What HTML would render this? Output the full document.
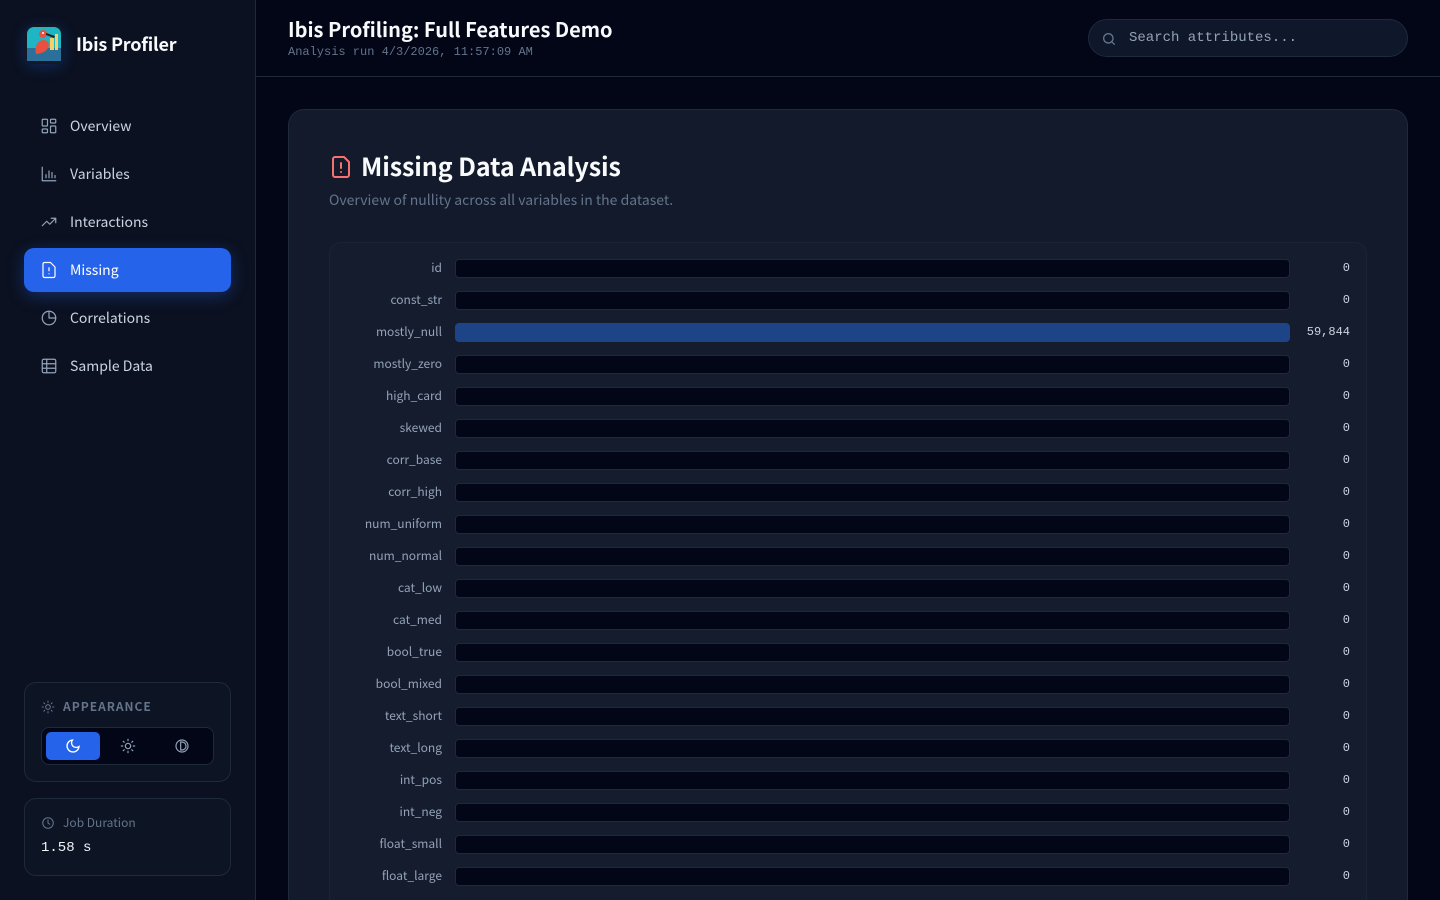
<!DOCTYPE html>
<html><head><meta charset="utf-8"><style>
*{box-sizing:border-box;margin:0;padding:0}
html{width:1440px;height:900px;overflow:hidden;background:#020617}
body{width:1440px;height:900px;overflow:hidden;background:#020617;font-family:"Noto Sans CJK JP","Liberation Sans",sans-serif;color:#e2e8f0;position:relative}
.mono{font-family:"Liberation Mono",monospace}
.side{position:absolute;left:0;top:0;width:256px;height:900px;background:#0b1120;border-right:1px solid #1e293b}
.logo{position:absolute;left:24px;top:24px;width:40px;height:40px;border-radius:10px;background:#111827;box-shadow:0 4px 14px rgba(37,99,235,.25);overflow:hidden}
.brand{position:absolute;left:76px;top:32px;font-size:18px;font-weight:700;color:#f8fafc;line-height:24px;letter-spacing:-.2px}
.nav{position:absolute;left:24px;width:207px;height:44px;display:flex;align-items:center;padding-left:16px;font-size:14px;color:#cbd5e1;border-radius:10px}
.nav svg{width:18px;height:18px;margin-right:12px;fill:none;stroke:#94a3b8;stroke-width:1.6;stroke-linecap:round;stroke-linejoin:round}
.nav.act{background:#2563eb;color:#fff;box-shadow:0 4px 16px rgba(37,99,235,.35)}
.nav.act svg{stroke:#fff}
.box{position:absolute;left:24px;width:207px;border:1px solid #1e293b;border-radius:12px;background:#0d1424}
.hdr{position:absolute;left:256px;top:0;right:0;height:77px;border-bottom:1px solid #1e293b}
.card{position:absolute;left:288px;top:109px;width:1120px;height:791px;border:1px solid #1e293b;border-bottom:none;border-radius:16px 16px 0 0;background:#121a2b;overflow:hidden}
.chart{position:absolute;left:40px;top:132px;width:1038px;height:660px;border:1px solid #1b2436;border-bottom:none;border-radius:12px 12px 0 0;background:#141c2e}
.row{position:absolute;left:0;width:100%;height:20px}
.row .l{position:absolute;right:924px;top:-1px;font-size:12px;color:#94a3b8;line-height:20px;white-space:nowrap}
.row .b{position:absolute;left:125px;width:835px;top:0;height:19px;background:#020617;border:1px solid #1e293b;border-radius:4px}
.row .b.f{background:#1e4488;border-color:#1e4488}
.row .v{position:absolute;right:16px;top:-1px;font-size:12px;color:#cbd5e1;line-height:20px}
</style></head><body>
<div class="side">
 <div class="logo"><svg width="40" height="40" viewBox="0 0 40 40"><rect x="3" y="3" width="34" height="34" rx="7" fill="#1fb5c4"/><rect x="3" y="24" width="34" height="13" fill="#2b6f9b"/><rect x="26" y="14" width="4" height="12" fill="#f2d36b"/><rect x="31" y="10" width="3" height="16" fill="#f2d36b"/><path d="M12 30 C10 22 14 16 20 16 C24 16 26 20 24 24 C22 28 16 30 12 30Z" fill="#e8503f"/><circle cx="19" cy="10" r="4" fill="#e8503f"/><path d="M22 9 L31 12 L30 14 L22 11Z" fill="#222"/><circle cx="19" cy="9" r="1" fill="#fff"/></svg></div>
 <div class="brand">Ibis Profiler</div>
 <div class="nav" style="top:104px"><svg viewBox="0 0 24 24"><rect x="3" y="3" width="7" height="9" rx="1"/><rect x="14" y="3" width="7" height="5" rx="1"/><rect x="14" y="12" width="7" height="9" rx="1"/><rect x="3" y="16" width="7" height="5" rx="1"/></svg>Overview</div>
 <div class="nav" style="top:152px"><svg viewBox="0 0 24 24"><path d="M3 3v18h18M8 17v-4M12 17V8M16 17v-7M20 17v-3"/></svg>Variables</div>
 <div class="nav" style="top:200px"><svg viewBox="0 0 24 24"><path d="M3 17l6-6 4 4 8-8M15 7h6v6"/></svg>Interactions</div>
 <div class="nav act" style="top:248px"><svg viewBox="0 0 24 24"><path d="M14 2H6a2 2 0 0 0-2 2v16a2 2 0 0 0 2 2h12a2 2 0 0 0 2-2V8z"/><path d="M12 9v4M12 17h.01"/></svg>Missing</div>
 <div class="nav" style="top:296px"><svg viewBox="0 0 24 24"><circle cx="12" cy="12" r="9"/><path d="M12 3v9h9"/></svg>Correlations</div>
 <div class="nav" style="top:344px"><svg viewBox="0 0 24 24"><rect x="3" y="3" width="18" height="18" rx="2"/><path d="M3 9h18M3 15h18M9 3v18"/></svg>Sample Data</div>
 <div class="box" style="top:682px;height:100px">
  <div style="position:absolute;left:16px;top:15px;display:flex;align-items:center;font-size:12px;font-weight:700;letter-spacing:1px;color:#64748b"><svg width="14" height="14" viewBox="0 0 24 24" fill="none" stroke="#64748b" stroke-width="1.8" stroke-linecap="round" style="margin-right:8px"><circle cx="12" cy="12" r="4"/><path d="M12 2v2M12 20v2M4.9 4.9l1.4 1.4M17.7 17.7l1.4 1.4M2 12h2M20 12h2M4.9 19.1l1.4-1.4M17.7 6.3l1.4-1.4"/></svg>APPEARANCE</div>
  <div style="position:absolute;left:16px;top:44px;width:173px;height:38px;border:1px solid #1e293b;border-radius:8px;background:#020617">
   <div style="position:absolute;left:4px;top:4px;width:54px;height:28px;background:#2563eb;border-radius:5px"><svg style="position:absolute;left:19px;top:6px" width="16" height="16" viewBox="0 0 24 24" fill="none" stroke="#fff" stroke-width="2" stroke-linecap="round"><path d="M21 12.8A9 9 0 1 1 11.2 3 7 7 0 0 0 21 12.8z"/></svg></div>
   <svg style="position:absolute;left:78px;top:10px" width="16" height="16" viewBox="0 0 24 24" fill="none" stroke="#94a3b8" stroke-width="1.8" stroke-linecap="round"><circle cx="12" cy="12" r="4"/><path d="M12 2v2M12 20v2M4.9 4.9l1.4 1.4M17.7 17.7l1.4 1.4M2 12h2M20 12h2M4.9 19.1l1.4-1.4M17.7 6.3l1.4-1.4"/></svg>
   <svg style="position:absolute;left:132px;top:10px" width="16" height="16" viewBox="0 0 24 24" fill="none" stroke="#94a3b8" stroke-width="1.8"><circle cx="12" cy="12" r="9"/><path d="M10 6h2a6 6 0 0 1 0 12h-2z"/></svg>
  </div>
 </div>
 <div class="box" style="top:798px;height:78px">
  <div style="position:absolute;left:16px;top:15px;display:flex;align-items:center;font-size:12px;color:#64748b"><svg width="14" height="14" viewBox="0 0 24 24" fill="none" stroke="#64748b" stroke-width="1.8" stroke-linecap="round" style="margin-right:8px"><circle cx="12" cy="12" r="9"/><path d="M12 7v5l3 2"/></svg>Job Duration</div>
  <div class="mono" style="position:absolute;left:16px;top:41px;font-size:14px;color:#f1f5f9">1.58 s</div>
 </div>
</div>
<div class="hdr">
 <div style="position:absolute;left:32px;top:15px;font-size:20px;font-weight:700;color:#f8fafc;line-height:28px">Ibis Profiling: Full Features Demo</div>
 <div class="mono" style="position:absolute;left:32px;top:45px;font-size:12px;color:#64748b">Analysis run 4/3/2026, 11:57:09 AM</div>
 <div style="position:absolute;left:832px;top:19px;width:320px;height:38px;border:1px solid #1e293b;border-radius:19px;background:#0f172a">
  <svg style="position:absolute;left:12px;top:11px" width="16" height="16" viewBox="0 0 24 24" fill="none" stroke="#64748b" stroke-width="2" stroke-linecap="round"><circle cx="11" cy="11" r="7"/><path d="M20 20l-4-4"/></svg>
  <div class="mono" style="position:absolute;left:40px;top:10px;font-size:14px;color:#94a3b8">Search attributes...</div>
 </div>
</div>
<div class="card">
 <svg style="position:absolute;left:41px;top:45px" width="22" height="24" viewBox="0 0 22 24" fill="none" stroke="#f87171" stroke-width="2" stroke-linecap="round" stroke-linejoin="round"><path d="M14 2H5a2 2 0 0 0-2 2v16a2 2 0 0 0 2 2h12a2 2 0 0 0 2-2V7z"/><path d="M11 8v5M11 17h.01"/></svg>
 <div style="position:absolute;left:72px;top:39px;font-size:25px;font-weight:700;color:#f8fafc;line-height:34px;letter-spacing:-.1px">Missing Data Analysis</div>
 <div style="position:absolute;left:40px;top:80px;font-size:14px;color:#64748b">Overview of nullity across all variables in the dataset.</div>
 <div class="chart">
  <div class="row" style="top:16px"><span class="l">id</span><span class="b"></span><span class="v mono">0</span></div>
  <div class="row" style="top:48px"><span class="l">const_str</span><span class="b"></span><span class="v mono">0</span></div>
  <div class="row" style="top:80px"><span class="l">mostly_null</span><span class="b f"></span><span class="v mono">59,844</span></div>
  <div class="row" style="top:112px"><span class="l">mostly_zero</span><span class="b"></span><span class="v mono">0</span></div>
  <div class="row" style="top:144px"><span class="l">high_card</span><span class="b"></span><span class="v mono">0</span></div>
  <div class="row" style="top:176px"><span class="l">skewed</span><span class="b"></span><span class="v mono">0</span></div>
  <div class="row" style="top:208px"><span class="l">corr_base</span><span class="b"></span><span class="v mono">0</span></div>
  <div class="row" style="top:240px"><span class="l">corr_high</span><span class="b"></span><span class="v mono">0</span></div>
  <div class="row" style="top:272px"><span class="l">num_uniform</span><span class="b"></span><span class="v mono">0</span></div>
  <div class="row" style="top:304px"><span class="l">num_normal</span><span class="b"></span><span class="v mono">0</span></div>
  <div class="row" style="top:336px"><span class="l">cat_low</span><span class="b"></span><span class="v mono">0</span></div>
  <div class="row" style="top:368px"><span class="l">cat_med</span><span class="b"></span><span class="v mono">0</span></div>
  <div class="row" style="top:400px"><span class="l">bool_true</span><span class="b"></span><span class="v mono">0</span></div>
  <div class="row" style="top:432px"><span class="l">bool_mixed</span><span class="b"></span><span class="v mono">0</span></div>
  <div class="row" style="top:464px"><span class="l">text_short</span><span class="b"></span><span class="v mono">0</span></div>
  <div class="row" style="top:496px"><span class="l">text_long</span><span class="b"></span><span class="v mono">0</span></div>
  <div class="row" style="top:528px"><span class="l">int_pos</span><span class="b"></span><span class="v mono">0</span></div>
  <div class="row" style="top:560px"><span class="l">int_neg</span><span class="b"></span><span class="v mono">0</span></div>
  <div class="row" style="top:592px"><span class="l">float_small</span><span class="b"></span><span class="v mono">0</span></div>
  <div class="row" style="top:624px"><span class="l">float_large</span><span class="b"></span><span class="v mono">0</span></div>
 </div>
</div>
</body></html>
